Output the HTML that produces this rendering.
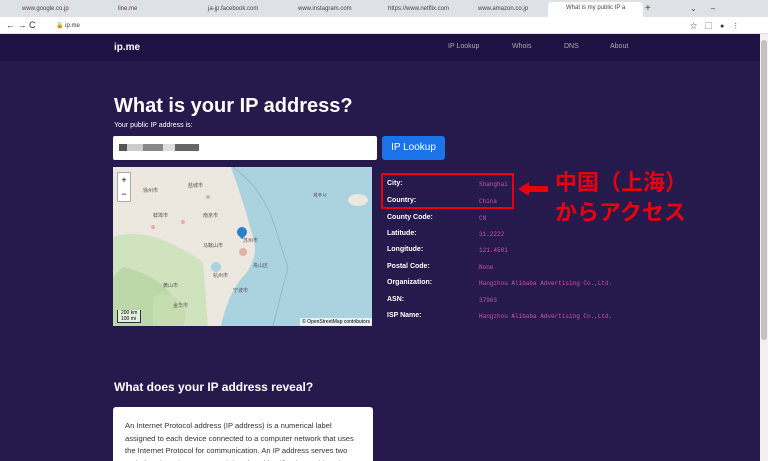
<!DOCTYPE html>
<html><head><meta charset="utf-8"><style>
*{margin:0;padding:0;box-sizing:border-box}
html,body{width:768px;height:461px;overflow:hidden}
body{font-family:"Liberation Sans","Noto Sans CJK JP",sans-serif;background:#261a4d;position:relative}
.abs{position:absolute}
.tabs{top:0;left:0;width:768px;height:17px;background:#dee1e6;font-size:6px;color:#444}
.tab{position:absolute;top:3px;height:14px;line-height:12px;padding-left:18px}
.addr{top:17px;left:0;width:768px;height:17px;background:#fff;border-bottom:1px solid #ddd;font-size:6px;color:#333}
.nav{top:34px;left:0;width:760px;height:27px;background:#1e1244}
.nav span{position:absolute;top:9px;font-size:7px;color:#aaa}
.lab{position:absolute;left:387px;font-size:7px;font-weight:bold;color:#fff}
.val{position:absolute;left:479px;font-size:6px;font-family:"Liberation Mono",monospace;color:#d14fb0}
</style></head><body>
<div class="abs tabs">
<div class="tab" style="left:4px">www.google.co.jp</div>
<div class="tab" style="left:100px">line.me</div>
<div class="tab" style="left:190px">ja-jp.facebook.com</div>
<div class="tab" style="left:280px">www.instagram.com</div>
<div class="tab" style="left:370px">https://www.netflix.com</div>
<div class="tab" style="left:460px">www.amazon.co.jp</div>
<div class="tab" style="left:548px;width:95px;background:#fff;border-radius:4px 4px 0 0;top:2px;height:15px">What is my public IP a</div>
<div class="tab" style="left:645px;padding:0;font-size:10px">+</div>
<div class="tab" style="left:690px;padding:0;font-size:8px;letter-spacing:14px">⌄–□✕</div>
</div>
<div class="abs addr"><span class="abs" style="left:6px;top:3px;font-size:9px">← → C</span><span class="abs" style="left:56px;top:5px">🔒 ip.me</span><span class="abs" style="left:690px;top:4px;font-size:7px;letter-spacing:8px">☆▢●⋮</span></div>
<div class="abs nav"><div class="abs" style="left:114px;top:8px;color:#fff;font-weight:bold;font-size:10px">ip.me</div>
<span style="left:448px">IP Lookup</span><span style="left:512px">Whois</span><span style="left:564px">DNS</span><span style="left:610px">About</span></div>
<div class="abs" style="left:760px;top:34px;width:8px;height:427px;background:#f1f1f1"><div style="margin:6px 1px;height:300px;background:#c1c1c1;border-radius:3px"></div></div>
<div class="abs" style="left:114px;top:95px;color:#fff;font-size:20px;font-weight:bold">What is your IP address?</div>
<div class="abs" style="left:114px;top:122px;color:#fff;font-size:7px">Your public IP address is:</div>
<div class="abs" style="left:113px;top:136px;width:264px;height:24px;background:#fff;border-radius:2px"><div style="margin:8px 6px;width:80px;height:7px;background:linear-gradient(90deg,#555 10%,#ccc 10% 30%,#888 30% 55%,#ddd 55% 70%,#666 70%)"></div></div>
<div class="abs" style="left:382px;top:136px;width:63px;height:24px;background:#1a73e8;border-radius:3px;color:#fff;font-size:10px;line-height:24px;text-align:center">IP Lookup</div>
<div class="abs" style="left:113px;top:167px;width:259px;height:159px;background:#ece7df;overflow:hidden">
<svg width="259" height="159" style="position:absolute;left:0;top:0">
<path d="M0 70 C30 60 60 75 90 95 L95 159 L0 159Z" fill="#cfe3bf"/>
<path d="M10 100 C50 110 70 130 60 159 L0 159 L0 110Z" fill="#bcd8a8"/>
<path d="M40 130 C60 120 80 140 70 159 L40 159Z" fill="#c6ddb0"/>
<path d="M118 0 C125 20 132 40 140 70 C145 85 140 100 128 112 C118 125 112 140 108 159 L259 159 L259 0Z" fill="#aad3df"/>
<ellipse cx="245" cy="33" rx="10" ry="6" fill="#ece7df"/>
<path d="M120 0 C160 30 160 60 175 100 L160 159" stroke="#8ab" fill="none" stroke-width="0.6"/>
<circle cx="103" cy="100" r="5" fill="#aad3df"/>
<g fill="#d77" opacity=".5"><circle cx="95" cy="30" r="2"/><circle cx="40" cy="60" r="2"/><circle cx="130" cy="85" r="4"/><circle cx="70" cy="55" r="2"/></g>
<g font-size="5" fill="#555"><text x="30" y="25">徐州市</text><text x="75" y="20">盐城市</text><text x="40" y="50">蚌埠市</text><text x="90" y="50">南京市</text><text x="90" y="80">马鞍山市</text><text x="130" y="75">苏州市</text><text x="140" y="100">舟山区</text><text x="100" y="110">杭州市</text><text x="120" y="125">宁波市</text><text x="50" y="120">黄山市</text><text x="60" y="140">金华市</text><text x="200" y="30">제주시</text></g>
</svg>
<div class="abs" style="left:124px;top:60px;width:10px;height:10px;background:#2a81cb;border-radius:50% 50% 50% 0;transform:rotate(-45deg)"></div>
<div class="abs" style="left:4px;top:5px;width:14px;height:30px;background:#fff;border:1px solid #aaa;font-size:9px;text-align:center;line-height:14px">+<br>−</div>
<div class="abs" style="right:0;bottom:0;background:rgba(255,255,255,.7);font-size:5px;padding:1px 2px">© OpenStreetMap contributors</div>
<div class="abs" style="left:4px;bottom:3px;font-size:5px;border:1px solid #333;border-top:0;padding:0 3px;background:rgba(255,255,255,.6)">200 km<br>100 mi</div>
</div>
<div class="abs" style="left:381px;top:173px;width:133px;height:36px;border:2px solid #e8000f"></div>
<div class="lab" style="top:180px">City:</div><div class="val" style="top:181px">Shanghai</div>
<div class="lab" style="top:197px">Country:</div><div class="val" style="top:198px">China</div>
<div class="lab" style="top:214px">County Code:</div><div class="val" style="top:215px">CN</div>
<div class="lab" style="top:230px">Latitude:</div><div class="val" style="top:231px">31.2222</div>
<div class="lab" style="top:246px">Longitude:</div><div class="val" style="top:247px">121.4581</div>
<div class="lab" style="top:263px">Postal Code:</div><div class="val" style="top:264px">None</div>
<div class="lab" style="top:279px">Organization:</div><div class="val" style="top:280px">Hangzhou Alibaba Advertising Co.,Ltd.</div>
<div class="lab" style="top:296px">ASN:</div><div class="val" style="top:297px">37963</div>
<div class="lab" style="top:312px">ISP Name:</div><div class="val" style="top:313px">Hangzhou Alibaba Advertising Co.,Ltd.</div>
<div class="abs" style="left:528px;top:186px;width:20px;height:6px;background:#e8000f"></div>
<div class="abs" style="left:518px;top:182px;width:0;height:0;border-top:7px solid transparent;border-bottom:7px solid transparent;border-right:11px solid #e8000f"></div>
<div class="abs" style="left:555px;top:166px;color:#e8000f;font-size:22px;font-weight:bold;line-height:30px;font-family:'Noto Sans CJK JP',sans-serif">中国（上海）<br>からアクセス</div>
<div class="abs" style="left:114px;top:380px;color:#fff;font-size:12px;font-weight:bold">What does your IP address reveal?</div>
<div class="abs" style="left:113px;top:407px;width:260px;height:54px;overflow:hidden;background:#fff;border-radius:3px 3px 0 0;padding:13px 12px;font-size:7.6px;line-height:12.5px;color:#333">An Internet Protocol address (IP address) is a numerical label assigned to each device connected to a computer network that uses the Internet Protocol for communication. An IP address serves two main functions: host or network interface identification and location</div>
</body></html>
